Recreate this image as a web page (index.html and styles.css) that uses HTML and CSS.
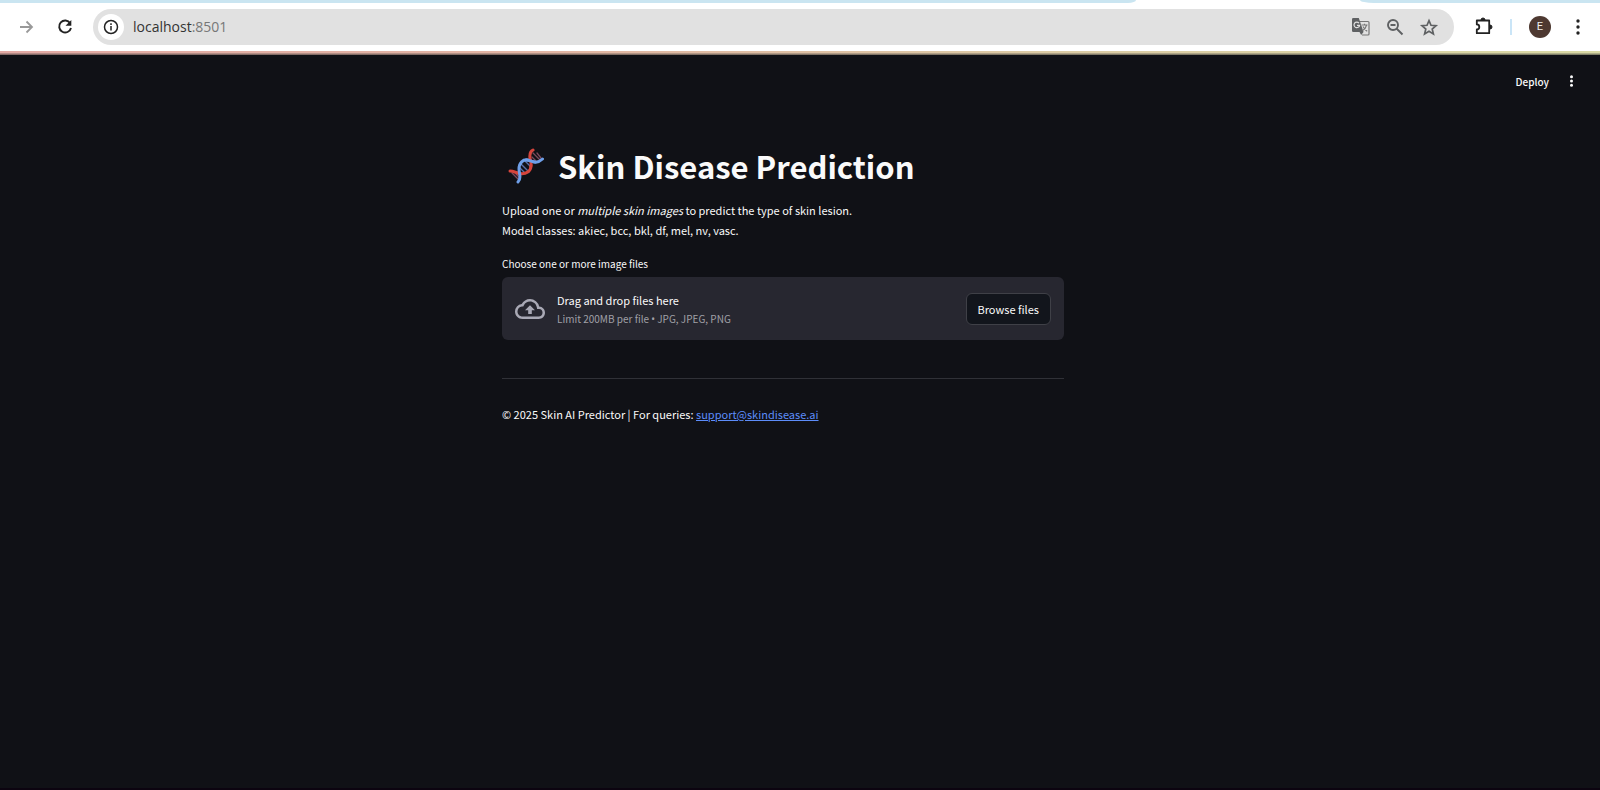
FILE: index.html
```html
<!DOCTYPE html>
<html lang="en">
<head>
<meta charset="utf-8">
<title>Skin Disease Prediction</title>
<link rel="stylesheet" href="styles.css">
</head>
<body>
<header class="browser">
  <div class="tabstrip"><span class="tab-left"></span><span class="tab-right"></span></div>
  <div class="toolbar">
    <button class="icon-button forward" aria-label="Forward"><svg width="20" height="20" viewBox="0 0 20 20" fill="none" stroke="#999" stroke-width="1.800"><path d="M4 10h12M10.500 4.500 16 10l-5.500 5.500"/></svg></button>
    <button class="icon-button reload" aria-label="Reload"><svg width="20" height="20" viewBox="0 0 20 20"><path d="M15.200 6.200A6 6 0 1 0 16 11" fill="none" stroke="#222" stroke-width="1.900"/><path d="M16.300 3v5.800h-5.800z" fill="#222"/></svg></button>
    <div class="address">
      <button class="site-info" aria-label="Site information"><svg width="18" height="18" viewBox="0 0 18 18"><circle cx="9" cy="9" r="6.500" fill="none" stroke="#222" stroke-width="1.500"/><path d="M9 8v4.500M9 5.200v1.700" stroke="#222" stroke-width="1.500"/></svg></button>
      <div class="url"><span>localhost</span><span class="port">:8501</span></div>
      <button class="icon-button" aria-label="Translate"><svg width="20" height="20" viewBox="0 0 20 20"><path d="M8 4.500h9q1 0 1 1V17q0 1-1 1h-6" fill="none" stroke="#777" stroke-width="1.200"/><path d="M2.300 1h5.500l4.700 14H2.300Q1 15 1 13.700V2.300Q1 1 2.300 1z" fill="#5f6163"/><path d="M8.500 15h4l-2.300 3z" fill="#5f6163"/><path d="M8 6.100A2.800 2.800 0 1 0 8.600 8.300H6" fill="none" stroke="#e1e1e1" stroke-width="1.200"/><path d="M10.500 8h6M13.500 6.700V8M15.600 8q-1 4-4 5.500M12 9.500q1.500 3 4.200 4.700" fill="none" stroke="#777" stroke-width="1.100"/></svg></button>
      <button class="icon-button" aria-label="Zoom"><svg width="20" height="20" viewBox="0 0 20 20" fill="none" stroke="#5f6163" stroke-width="1.900"><circle cx="8" cy="8" r="5"/><path d="M5.500 8h5M11.500 11.500l6 6"/></svg></button>
      <button class="icon-button" aria-label="Bookmark"><svg width="20" height="20" viewBox="0 0 20 20"><path d="M10 3.700l2 4.600 5 .4-3.800 3.300 1.200 4.900-4.400-2.600-4.400 2.600 1.200-4.900L3 8.700l5-.4z" fill="none" stroke="#5f6163" stroke-width="1.700"/></svg></button>
    </div>
    <button class="icon-button extensions" aria-label="Extensions"><svg width="20" height="20" viewBox="0 0 20 20"><path d="M2.800 3.500h12.400v12.700H2.800v-3.800q2.500 0 2.500-2.500T2.800 7.400z" fill="none" stroke="#222" stroke-width="1.800" stroke-linejoin="round"/><path d="M7 3a2 2 0 0 1 4 0zM16 8a2 2 0 0 1 0 4z" fill="#222" stroke="#222"/></svg></button>
    <span class="divider"></span>
    <button class="avatar" aria-label="Profile">E</button>
    <button class="icon-button" aria-label="Browser menu"><svg width="20" height="20" viewBox="0 0 20 20" fill="#222"><circle cx="10" cy="4" r="1.700"/><circle cx="10" cy="10" r="1.700"/><circle cx="10" cy="16" r="1.700"/></svg></button>
  </div>
</header>
<div class="app">
  <div class="app-header">
    <button class="deploy">Deploy</button>
    <button class="icon-button" aria-label="App menu"><svg width="20" height="20" viewBox="0 0 20 20" fill="#fafafa"><circle cx="10.500" cy="5.800" r="1.500"/><circle cx="10.500" cy="10" r="1.500"/><circle cx="10.500" cy="14.200" r="1.500"/></svg></button>
  </div>
  <main class="content">
    <h1 class="title">
      <svg class="dna" width="36" height="36" viewBox="0 0 36 36" fill="none" stroke-linecap="round">
        <path d="M4 25l6 6M8 26l3 3M29 5l4 5M25 5l7 7M24 9l4 4" stroke="#7d4a5c" stroke-width="1.300"/>
        <path d="M13 16l8 8M12 20l5 5M17 13l6 6" stroke="#5b6fa8" stroke-width="1.400"/>
        <path d="M2 23C6 23 8 25 12 25.500C18 26.500 23 23 23 18" stroke="#d6453c" stroke-width="3"/>
        <path d="M10 34C14 30 11 26 11 21C11 15 15 11 20 12C24 13 28 17 34.500 11" stroke="#6f9fe8" stroke-width="3"/>
        <path d="M23 18C24 14 21 11 22 7C22 5 23 3 25 2" stroke="#d6453c" stroke-width="3"/>
        <path d="M18 12C22 12 24 14 27 14" stroke="#6f9fe8" stroke-width="3"/>
      </svg>
      <span>Skin Disease Prediction</span>
    </h1>
    <p class="text">Upload one or <em>multiple skin images</em> to predict the type of skin lesion.<br>Model classes: akiec, bcc, bkl, df, mel, nv, vasc.</p>
    <div class="label" id="files-label">Choose one or more image files</div>
    <section class="dropzone" aria-labelledby="files-label">
      <svg width="30" height="30" viewBox="0 0 24 24" fill="#a9a9b5"><path d="M19.350 10.040A7.490 7.490 0 0 0 12 4C9.110 4 6.600 5.640 5.350 8.040A5.994 5.994 0 0 0 0 14c0 3.310 2.690 6 6 6h13c2.760 0 5-2.240 5-5 0-2.640-2.050-4.780-4.650-4.960zM19 18H6c-2.210 0-4-1.790-4-4 0-2.050 1.530-3.760 3.560-3.970l1.070-.11.5-.95A5.469 5.469 0 0 1 12 6c2.620 0 4.880 1.860 5.390 4.430l.3 1.500 1.530.11A2.980 2.980 0 0 1 22 15c0 1.650-1.350 3-3 3zM8 13h2.550v3h2.900v-3H16l-4-4z"/></svg>
      <div class="instructions">
        <div class="drop-title">Drag and drop files here</div>
        <div class="limit">Limit 200MB per file <span class="bullet">•</span> JPG, JPEG, PNG</div>
      </div>
      <button class="browse">Browse files</button>
    </section>
    <hr class="rule">
    <p class="text">© 2025 Skin AI Predictor | For queries: <a class="link" href="mailto:support@skindisease.ai">support@skindisease.ai</a></p>
  </main>
</div>
</body>
</html>
```
FILE: styles.css
```css
* { box-sizing: border-box; }
body {
  margin: 0;
  min-height: 100vh;
  display: flex;
  flex-direction: column;
  background: #101116;
  color: #fafafa;
  font-family: "Noto Sans CJK SC", "Noto Sans", sans-serif;
}
button {
  margin: 0;
  padding: 0;
  border: 0;
  background: none;
  color: inherit;
  font: inherit;
}
svg { display: block; flex: none; }
.browser { background: #fff; color: #333; }
.browser::after {
  content: "";
  display: block;
  height: 4px;
  background: linear-gradient(#fff0 0 50%, #3338 75%), linear-gradient(90deg, #e3aaa4, #e2b6a4 35%, #dccba5 65%, #d9d9a5);
}
.tabstrip { height: 3px; display: flex; justify-content: space-between; }
.tab-left { width: 71%; background: #cae5f1; border-bottom-right-radius: 8px 3px; }
.tab-right { width: 15%; background: #cae5f1; border-bottom-left-radius: 14px 3px; }
.toolbar { display: flex; align-items: center; height: 48px; padding: 0 12px 0 16px; }
.icon-button { width: 20px; height: 20px; flex: none; }
.reload { margin: 0 18px 0 19px; }
.address {
  flex: 1;
  display: flex;
  align-items: center;
  gap: 14px;
  height: 36px;
  padding: 0 15px 0 5px;
  border-radius: 18px;
  background: #e1e1e1;
}
.site-info {
  display: grid;
  place-items: center;
  width: 26px;
  height: 26px;
  border-radius: 50%;
  background: #fff;
}
.url { flex: 1; margin-left: -5px; font: 14px/20px "Open Sans", "Noto Sans", sans-serif; }
.port { color: #777; }
.extensions { margin-left: 20px; }
.divider { width: 2px; height: 16px; margin: 0 17px 0 16px; background: #cae5f7; }
.avatar {
  width: 22px;
  height: 22px;
  margin-right: 17px;
  border-radius: 50%;
  background: #4e3931;
  color: #eee;
  font: 11px/22px Roboto, sans-serif;
}
.app { flex: 1; border-bottom: 2px solid #0c0410; }
.app-header {
  display: flex;
  align-items: center;
  justify-content: flex-end;
  gap: 12px;
  height: 52px;
  padding-right: 19px;
}
.deploy { font-size: 10px; font-weight: 500; }
.content { width: min(562px, 90%); margin-left: calc(50% - 298px); }
.title {
  display: flex;
  align-items: center;
  gap: 14px;
  margin: 35px 0 10px;
  padding-left: 6px;
  font-size: 31px;
  line-height: 48px;
  font-weight: 700;
}
.text { margin: 0; font-size: 11px; line-height: 20px; }
.label { margin: 15px 0 4px; font-size: 10px; line-height: 18px; }
.dropzone {
  display: flex;
  align-items: center;
  gap: 12px;
  min-height: 63px;
  padding: 12px 13px;
  border-radius: 6px;
  background: #272730;
}
.instructions { flex: 1; }
.drop-title { font-size: 11px; line-height: 20px; }
.limit { font-size: 10px; line-height: 18px; color: #a0a0a7; }
.bullet { font-family: "Noto Sans", sans-serif; }
.browse {
  height: 32px;
  padding: 0 11px;
  border: 1px solid #3f4047;
  border-radius: 6px;
  background: #12151c;
  font-size: 11px;
}
.rule { height: 1px; margin: 38px 0 25px; border: 0; background: #303137; }
.link { color: #5d8dfa; }
```
